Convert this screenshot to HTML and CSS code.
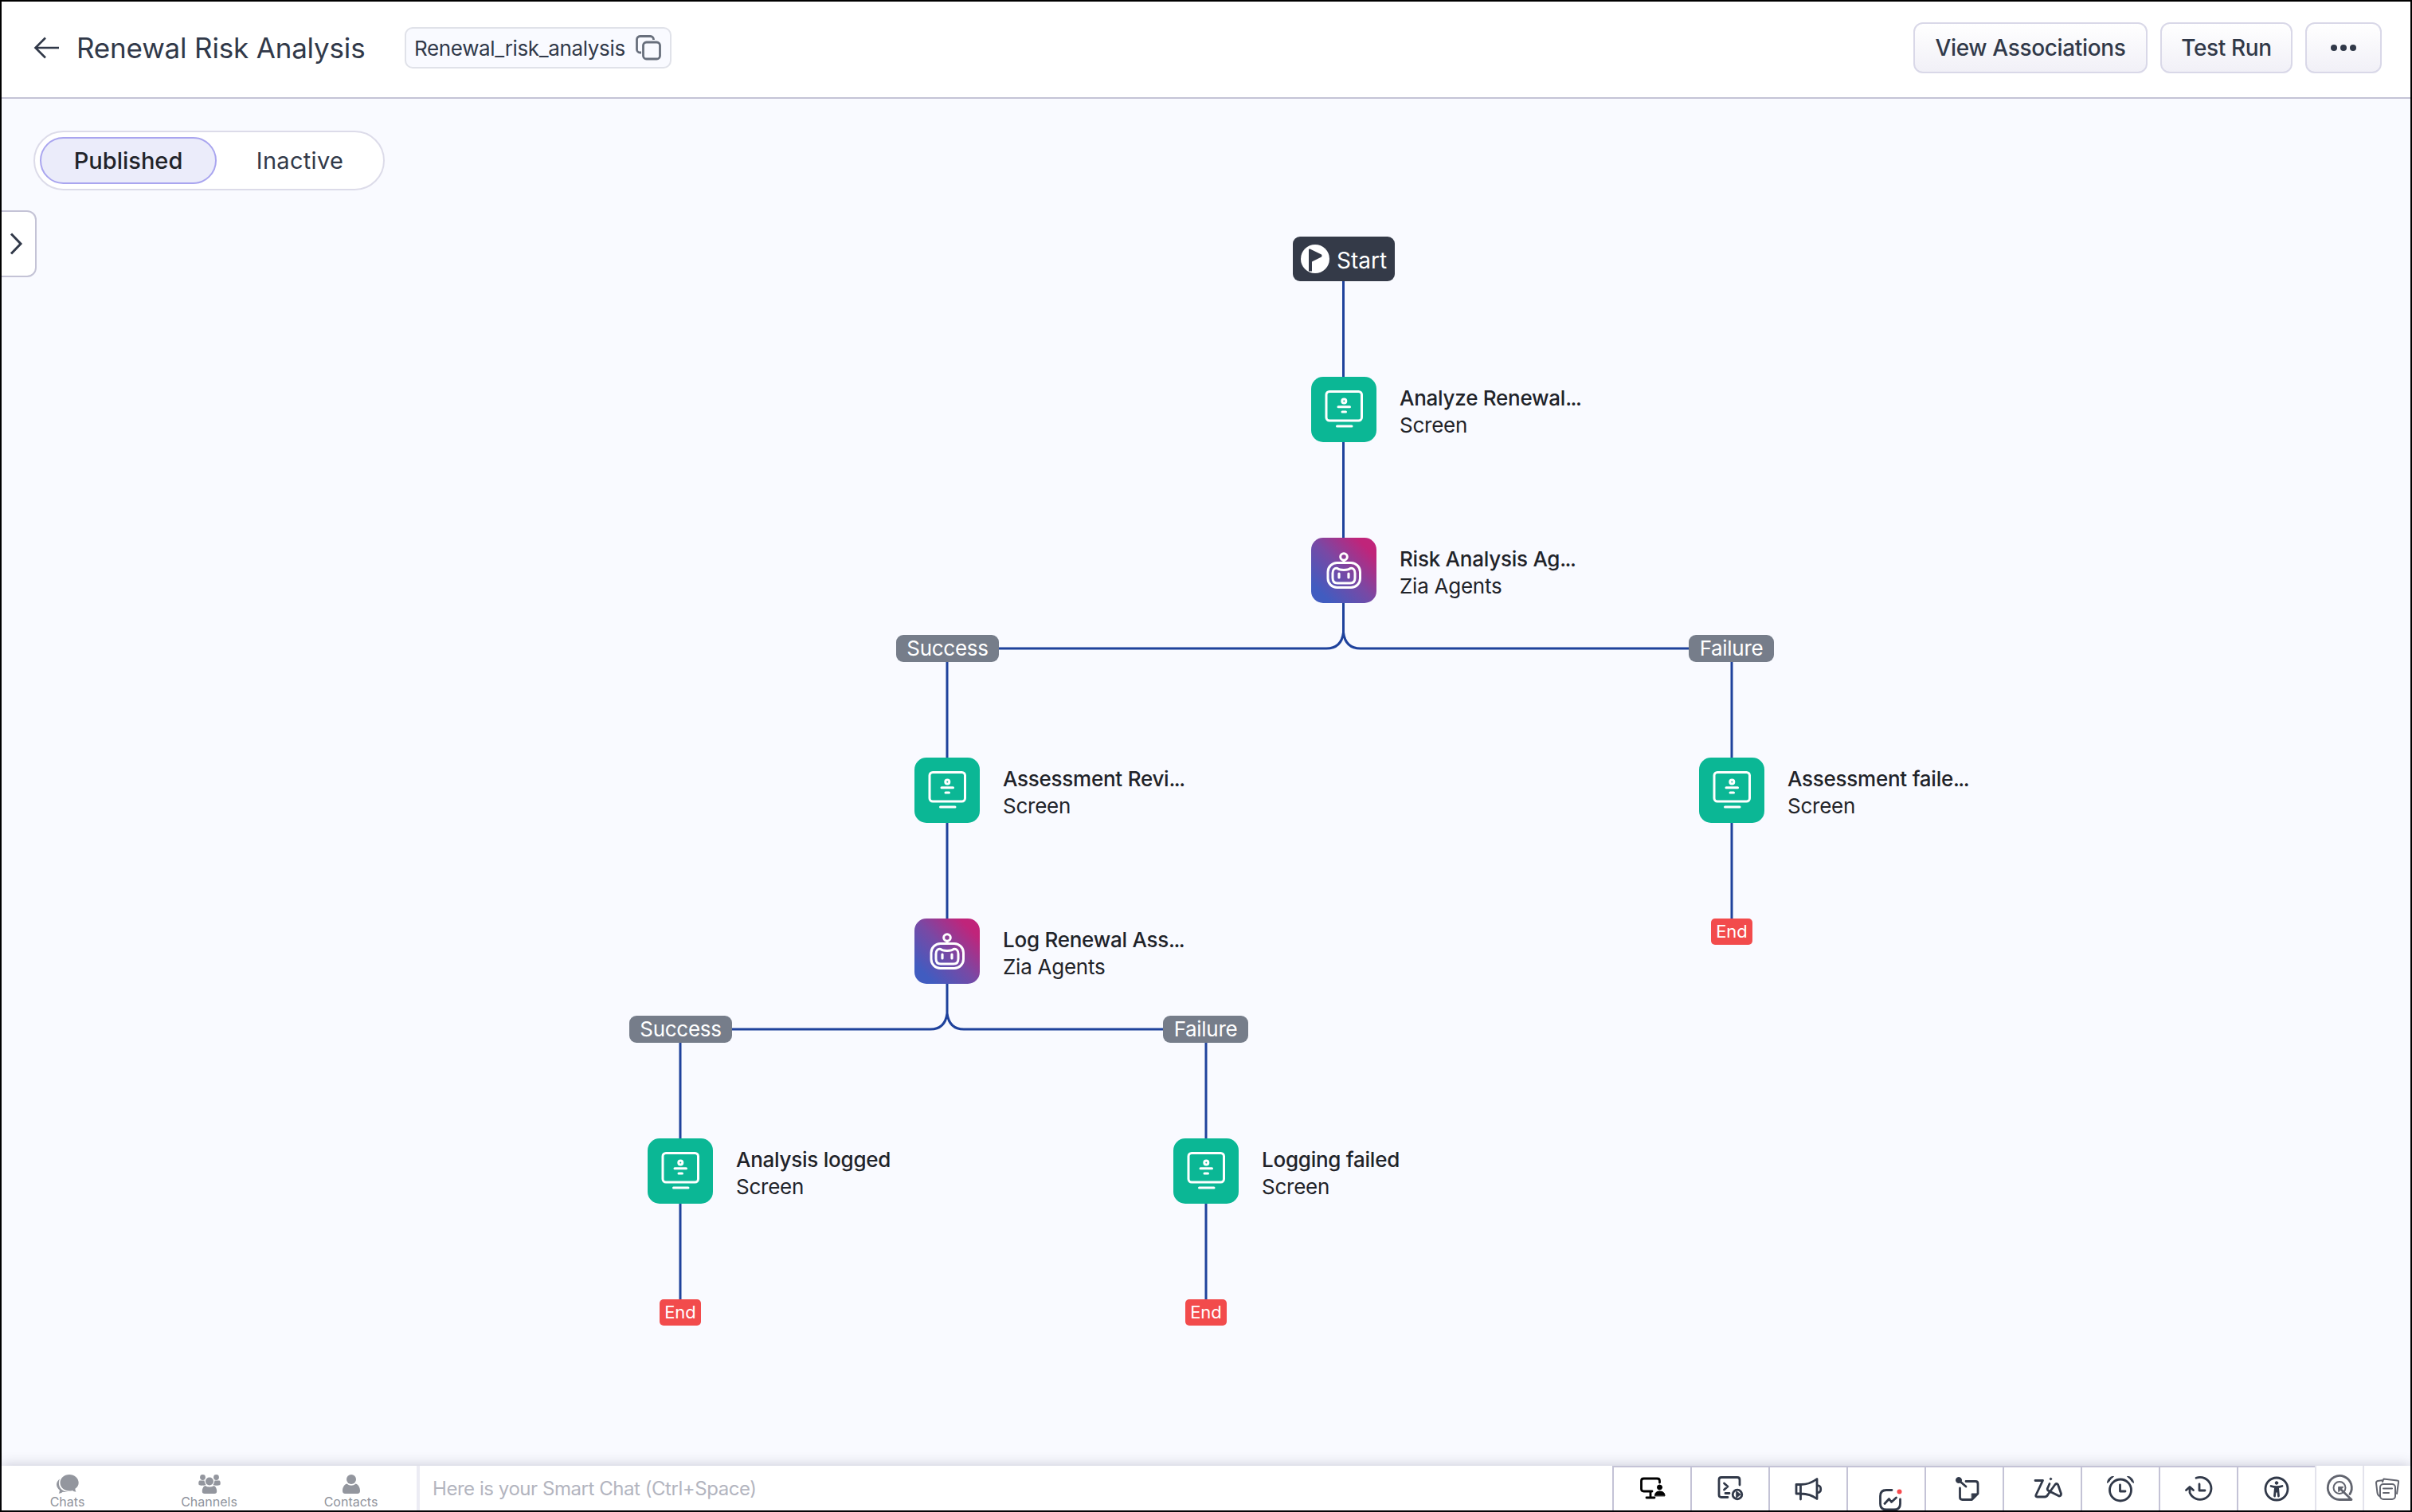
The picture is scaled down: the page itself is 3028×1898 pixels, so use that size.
FILE: index.html
```html
<!DOCTYPE html>
<html lang="en">
<head>
  <meta charset="UTF-8">
  <meta name="viewport" content="width=device-width, initial-scale=1.0">
  <title>Renewal Risk Analysis</title>
  <link rel="stylesheet" href="styles.css">
</head>
<body>
<svg class="defs" width="0" height="0">
  <linearGradient id="ziaGradient" x1="0.15" y1="0.85" x2="0.85" y2="0.15">
    <stop offset="0" stop-color="#415cc0"/>
    <stop offset="0.5" stop-color="#7849a5"/>
    <stop offset="1" stop-color="#c0247a"/>
  </linearGradient>
  <symbol id="icon-screen" viewBox="0 0 82 82">
    <rect width="82" height="82" rx="15" fill="#0bb795"/>
    <g fill="none" stroke="#fff" stroke-width="3" stroke-linecap="round">
      <rect x="19" y="18.500" width="44.500" height="36.500" rx="4"/>
      <circle cx="41.300" cy="30.500" r="2.500"/>
      <path d="M34 37.800h14.500M39 44h4.500M32.500 62h18.500"/>
    </g>
  </symbol>
  <symbol id="icon-zia" viewBox="0 0 82 82">
    <rect width="82" height="82" rx="15" fill="url(#ziaGradient)"/>
    <g fill="none" stroke="#fff" stroke-width="3" stroke-linecap="round" stroke-linejoin="round">
      <circle cx="41" cy="24" r="4.300"/>
      <path d="M41 28.500v3"/>
      <rect x="21" y="31.500" width="40.500" height="31" rx="11.500"/>
      <path d="M33 38.500c2 2.500 14 2.500 16 0 4-1 6 2 6 6v6c0 4-2 6.500-6 6.500H33c-4 0-6-2.500-6-6.500v-6c0-4 2-7 6-6z"/>
      <path d="M35 45v5M47 45v5" stroke-width="3.200"/>
    </g>
  </symbol>
</svg>

<div class="app">
  <header class="header">
    <svg class="back" viewBox="0 0 32 28"><path d="M31 14H2M14 1.500L1.500 14 14 26.500"/></svg>
    <h1 class="title">Renewal Risk Analysis</h1>
    <div class="chip">
      <span>Renewal_risk_analysis</span>
      <svg class="copy" viewBox="0 0 32 32"><path d="M7 22H5.500a4 4 0 0 1-4-4V5.500a4 4 0 0 1 4-4h13a4 4 0 0 1 4 4V6"/><rect x="9.500" y="9" width="21" height="21" rx="4"/></svg>
    </div>
    <div class="actions">
      <button class="btn btn-view">View Associations</button>
      <button class="btn btn-test">Test Run</button>
      <button class="btn btn-more"><i></i><i></i><i></i></button>
    </div>
  </header>

  <main class="canvas">
    <div class="toggle">
      <span class="toggle-item active">Published</span>
      <span class="toggle-item">Inactive</span>
    </div>
    <div class="side-handle"><svg viewBox="0 0 16 28"><path d="M2 1.500L14 14 2 26.500"/></svg></div>

    <!-- connectors, drawn in page coordinates -->
    <svg class="edges" viewBox="2 124 3024 1716">
      <path d="M1686.500 353V795M1686.500 794Q1684 814 1665 814H1254M1686.500 794Q1689 814 1708 814H2120"/>
      <path d="M1189 831V1273M1189 1272Q1186.500 1292 1168 1292H919M1189 1272Q1191.500 1292 1210 1292H1460"/>
      <path d="M2174 831V1153M854 1309V1631M1514 1309V1631"/>
    </svg>

    <div class="start">
      <svg viewBox="0 0 36 36"><circle cx="18" cy="18" r="18" fill="#fff"/><path d="M10 6.500q0-1.500 1.600-1L26 12.500q1.200 1.500 0 3L14 21.500V33.500L10 33.500z" fill="#343a48"/></svg>
      <span>Start</span>
    </div>

    <div class="node n1"><svg><use href="#icon-screen"/></svg><div class="label"><b>Analyze Renewal<i>...</i></b><span>Screen</span></div></div>
    <div class="node n2"><svg><use href="#icon-zia"/></svg><div class="label"><b>Risk Analysis Ag<i>...</i></b><span>Zia Agents</span></div></div>
    <div class="node n3"><svg><use href="#icon-screen"/></svg><div class="label"><b>Assessment Revi<i>...</i></b><span>Screen</span></div></div>
    <div class="node n4"><svg><use href="#icon-zia"/></svg><div class="label"><b>Log Renewal Ass<i>...</i></b><span>Zia Agents</span></div></div>
    <div class="node n5"><svg><use href="#icon-screen"/></svg><div class="label"><b>Assessment faile<i>...</i></b><span>Screen</span></div></div>
    <div class="node n6"><svg><use href="#icon-screen"/></svg><div class="label"><b>Analysis logged</b><span>Screen</span></div></div>
    <div class="node n7"><svg><use href="#icon-screen"/></svg><div class="label"><b>Logging failed</b><span>Screen</span></div></div>

    <div class="badge success b1">Success</div>
    <div class="badge failure b2">Failure</div>
    <div class="badge success b3">Success</div>
    <div class="badge failure b4">Failure</div>

    <div class="end e1">End</div>
    <div class="end e2">End</div>
    <div class="end e3">End</div>
  </main>

  <footer class="bottom-bar">
    <nav class="chat-tabs">
      <div class="chat-tab">
        <svg viewBox="0 0 28 24"><path d="M16 0C9.500 0 4.500 4.500 4.500 10.300S9.500 20.500 16 20.500c1.500 0 2.800-.2 4-.6 1.300 1 2.800 1.600 4.600 1.700-.9-1.200-1.200-2.400-1.200-3.800 2.700-1.900 4.300-4.600 4.300-7.500C27.700 4.500 22.500 0 16 0z"/><path d="M4 5.500C1.500 7.300 0 9.800 0 12.500c0 2.700 1.500 5.200 3.800 6.900.1 1.500-.2 2.900-1.100 4.400 2 0 3.800-.8 5.200-2 1.800.4 4.200.4 6.300-.1C7.500 21.500 2.500 16.500 2.900 10c.1-1.700.4-3 1.100-4.500z"/></svg>
        <span>Chats</span>
      </div>
      <div class="chat-tab">
        <svg viewBox="0 0 28 24"><circle cx="5.500" cy="3.500" r="3.400"/><circle cx="22.500" cy="3.500" r="3.400"/><circle cx="14" cy="8.500" r="5"/><path d="M1.500 7.500h6c.4 2.300 1 4 2 5.500-2 .8-6.500 1-8.800 0C-.2 11 .3 8.500 1.500 7.500zM26.500 7.500h-6c-.4 2.300-1 4-2 5.500 2 .8 6.500 1 8.800 0 .9-2 .4-4.500-.8-5.500zM8.500 14c3.500 2 7.500 2 11 0 2.500.8 3.700 4 3.700 7 0 2-1 3-3 3H7.800c-2 0-3-1-3-3 0-3 1.200-6.200 3.700-7z"/></svg>
        <span>Channels</span>
      </div>
      <div class="chat-tab">
        <svg viewBox="0 0 28 24"><circle cx="14" cy="6" r="6"/><path d="M8.500 11.500c3.300 3 7.700 3 11 0 3.700 1 5.500 5 5.500 9 0 2.300-1 3.500-3.300 3.500H6.300C4 24 3 22.800 3 20.500c0-4 1.800-8 5.500-9z"/></svg>
        <span>Contacts</span>
      </div>
    </nav>
    <div class="smart-chat">Here is your Smart Chat (Ctrl+Space)</div>
    <div class="tools">
      <div class="tool"><svg class="black" viewBox="0 0 36 36"><path d="M27.500 10V8q0-3-3-3h-17q-3 0-3 3v10q0 3 3 3H18M16 21v7M11 29h10"/><circle cx="27.500" cy="16" r="3" class="fill"/><path d="M21.500 26.500c0-4 2.500-5.500 6-5.500s6.500 1.500 6.500 5.500z" class="fill"/></svg></div>
      <div class="tool"><svg viewBox="0 0 36 36"><path d="M30 13V6.500q0-3-3-3H7q-3 0-3 3v19q0 3 3 3h8M10.500 11l4.500 4-4.500 4M12 23.500h5"/><circle cx="27" cy="25" r="5.800"/><path d="M26 21l5 4-5 4z" class="fill"/></svg></div>
      <div class="tool"><svg viewBox="0 0 36 36"><path d="M3 12.500h6C16 12.500 23 10 29 5.500v25C23 26 16 24 9 24H3zM8.500 12.500V31M30 13.500c5 1 5 8.500 0 9.500"/></svg></div>
      <div class="tool low"><svg viewBox="0 0 36 36"><path d="M19 5.500h-7Q4.500 5.500 4.500 13v9.500Q4.500 30 12 30h10q7.500 0 7.500-7.500V17M10 22.500l5.500-6 3 4 6-5.500"/><circle cx="28.500" cy="7.500" r="3" class="red"/></svg></div>
      <div class="tool note"><svg viewBox="0 0 36 36"><path d="M15 8.500h12q3 0 3 3V24l-7.500 7.500H10.500q-3 0-3-3V17M7 8l8 7"/><circle cx="6" cy="7" r="3.500" class="fill"/><path d="M22.500 24H30l-7.500 7.500z" class="fill"/></svg></div>
      <div class="tool zia"><svg viewBox="0 0 36 36"><path d="M2 7.500h9.500L3 25.500q-1 2.500 1.500 2.500H14q2.500 0 4-3l9-12.500q2-2 3.500 0l4 11.500q0 3-2.500 3L18 20q-1.500-2 0-4l2-4.500"/><circle cx="21.500" cy="5.500" r="1.200" class="fill"/></svg></div>
      <div class="tool"><svg viewBox="0 0 36 36"><circle cx="18" cy="19.500" r="13.500"/><path d="M17.500 13v8H24"/><path d="M1.500 10C2 5 6 2 9.500 2.500q-3.500 2-6 6.500zM34.500 10C34 5 30 2 26.500 2.500q3.500 2 6 6.500z" class="fill"/></svg></div>
      <div class="tool"><svg viewBox="0 0 36 36"><path d="M15 4.300a14 14 0 1 1-8 18.500V17M2.500 19.500L7 15.500l4.500 4M19 12v8h7"/></svg></div>
      <div class="tool"><svg viewBox="0 0 36 36"><circle cx="18" cy="18" r="14"/><circle cx="18" cy="10.500" r="1.800" class="fill"/><path d="M11 14.500q7 2.500 14 0M18 16v5M15.500 27l1-11h3l1 11" /></svg></div>
      <div class="tool plain"><svg viewBox="0 0 36 36"><path d="M33 32.500H18A15 15 0 1 1 31 25.500M18 18l14.500 14"/><circle cx="18" cy="17.500" r="7.500" stroke-width="2"/><path d="M17 16.500h6l-6 6z" class="fill"/></svg></div>
      <div class="tool plain thin"><svg viewBox="0 0 36 36"><rect x="9" y="13" width="19" height="19" rx="4"/><path d="M8 28q-2-1-2.500-4L4 11.500q0-2 2-2.500l7-1M12 10l1.500-3.500 17 2q2 0 1.500 2.500l-2 14M13 18.500h11M13 24h7"/></svg></div>
    </div>
  </footer>
</div>
</body>
</html>
```
FILE: styles.css
```css
* {
  margin: 0;
  padding: 0;
  box-sizing: border-box;
  font-family: Inter, 'Liberation Sans', sans-serif;
}

body {
  width: 100vw;
  height: 100vh;
  overflow: hidden;
  background: #f9faff;
  color: #212329;
}

svg {
  display: block;
  overflow: visible;
}

.defs {
  position: absolute;
}

.app {
  height: 100vh;
  display: flex;
  flex-direction: column;
  border: 2px solid #000;
}

/* header */
.header {
  height: 122px;
  flex: none;
  display: flex;
  align-items: center;
  padding: 0 36px 4px 41px;
  background: #fff;
  border-bottom: 2px solid #c4c3d6;
  color: #313949;
}

.back {
  width: 32px;
  height: 28px;
  margin-right: 21px;
  fill: none;
  stroke: #313949;
  stroke-width: 2.6;
}

.title {
  width: 412px;
  font-size: 35px;
  font-weight: 400;
  letter-spacing: -0.18px;
  white-space: nowrap;
}

.chip {
  width: 335px;
  height: 52px;
  display: flex;
  align-items: center;
  justify-content: space-between;
  padding: 0 11px 0 10px;
  background: #f9faff;
  border: 2px solid #e0e2e9;
  border-radius: 10px;
  font-size: 26px;
  letter-spacing: -0.35px;
}

.copy {
  width: 32px;
  height: 32px;
  fill: none;
  stroke: #686f7c;
  stroke-width: 2.8;
}

.actions {
  margin-left: auto;
  display: flex;
  gap: 16px;
}

.btn {
  height: 64px;
  display: flex;
  align-items: center;
  justify-content: center;
  background: linear-gradient(#fff, #f1f0f7);
  border: 2px solid #d9d8e8;
  border-radius: 12px;
  color: #313949;
  font-size: 28px;
  font-weight: 500;
  letter-spacing: -0.35px;
  white-space: nowrap;
}

.btn-view {
  width: 294px;
}

.btn-test {
  width: 166px;
}

.btn-more {
  width: 96px;
  gap: 4px;
}

.btn-more i {
  width: 8px;
  height: 8px;
  border-radius: 50%;
  background: #313949;
}

/* canvas */
.canvas {
  position: relative;
  flex: 1;
  padding: 40px;
}

.toggle {
  width: 441px;
  height: 75px;
  display: flex;
  align-items: center;
  padding: 0 0 0 6px;
  background: #fff;
  border: 2px solid #dcdbe9;
  border-radius: 38px;
}

.toggle-item {
  flex: 1;
  height: 59px;
  display: flex;
  align-items: center;
  justify-content: center;
  color: #313949;
  font-size: 29px;
  letter-spacing: 0.3px;
}

.toggle-item.active {
  flex: 0 0 222px;
  background: #ebecfa;
  border: 2px solid #a9a5ef;
  border-radius: 30px;
  color: #212329;
  font-weight: 500;
  letter-spacing: 0;
}

.side-handle {
  position: absolute;
  left: 0;
  top: 140px;
  width: 44px;
  height: 84px;
  display: flex;
  align-items: center;
  padding-left: 10px;
  background: #fff;
  border: 2px solid #c4c3d6;
  border-left: 0;
  border-radius: 0 12px 12px 0;
}

.side-handle svg {
  width: 16px;
  height: 28px;
  fill: none;
  stroke: #313949;
  stroke-width: 3;
}

.edges {
  position: absolute;
  left: 0;
  top: 0;
  width: 3024px;
  height: 1716px;
  fill: none;
  stroke: #1f429c;
  stroke-width: 3;
}

.start {
  position: absolute;
  left: 1621px;
  top: 173px;
  width: 128px;
  height: 56px;
  display: flex;
  align-items: center;
  gap: 9px;
  padding: 0 10px;
  background: #343a48;
  border-radius: 9px;
  color: #fff;
  font-size: 28px;
}

.start svg {
  width: 36px;
  height: 36px;
  flex: none;
}

.start span {
  padding-top: 4px;
}

.node {
  position: absolute;
  display: flex;
  gap: 29px;
}

.node svg {
  width: 82px;
  height: 82px;
}

.label {
  display: flex;
  flex-direction: column;
  padding-top: 10px;
  font-size: 26px;
  line-height: 34px;
  letter-spacing: -0.25px;
  white-space: nowrap;
}

.label b {
  font-weight: 500;
}

.label i {
  font-style: normal;
  letter-spacing: -1.5px;
}

.n1 { left: 1644px; top: 349px; }
.n2 { left: 1644px; top: 551px; }
.n3 { left: 1146px; top: 827px; }
.n4 { left: 1146px; top: 1029px; }
.n5 { left: 2131px; top: 827px; }
.n6 { left: 811px; top: 1305px; }
.n7 { left: 1471px; top: 1305px; }

.badge {
  position: absolute;
  height: 34px;
  display: flex;
  align-items: center;
  justify-content: center;
  padding-bottom: 2px;
  background: #767d8a;
  border-radius: 9px;
  color: #fff;
  font-size: 26px;
  letter-spacing: -0.3px;
}

.success { width: 129px; }
.failure { width: 107px; }

.b1 { left: 1123px; top: 673px; }
.b2 { left: 2118px; top: 673px; }
.b3 { left: 788px; top: 1151px; }
.b4 { left: 1458px; top: 1151px; }

.end {
  position: absolute;
  width: 52px;
  height: 33px;
  display: flex;
  align-items: center;
  justify-content: center;
  padding-bottom: 1px;
  background: #f24b4c;
  border-radius: 5px;
  color: #fff;
  font-size: 22px;
}

.e1 { left: 2146px; top: 1029px; }
.e2 { left: 826px; top: 1507px; }
.e3 { left: 1486px; top: 1507px; }

/* bottom bar */
.bottom-bar {
  position: relative;
  height: 56px;
  flex: none;
  display: flex;
  background: #fff;
  box-shadow: 0 -2px 14px rgba(60, 60, 90, 0.22);
}

.chat-tabs {
  display: grid;
  grid-template-columns: 165px 191px 165px;
  border-right: 4px solid #ececf4;
}

.chat-tab {
  display: flex;
  flex-direction: column;
  align-items: center;
  padding-top: 11px;
  color: #8f939c;
  font-size: 16px;
  line-height: 20px;
}

.chat-tab svg {
  width: 28px;
  height: 24px;
  fill: #93969e;
}

.smart-chat {
  flex: 1;
  display: flex;
  align-items: center;
  padding-left: 16px;
  color: #b3b5bf;
  font-size: 24px;
  letter-spacing: -0.45px;
}

.tools {
  display: flex;
}

.tool {
  width: 98px;
  display: flex;
  align-items: center;
  justify-content: center;
  border-left: 2px solid #c4c3d6;
  border-top: 2px solid #c4c3d6;
}

.tool svg {
  width: 36px;
  height: 36px;
  fill: none;
  stroke: #313949;
  stroke-width: 2.8;
  stroke-linecap: round;
  stroke-linejoin: round;
}

.tool .fill {
  fill: #313949;
  stroke-width: 1;
}

.tool .red {
  fill: #f84b4f;
  stroke: none;
}

.tool svg.black {
  stroke: #000;
}

.tool .black .fill {
  fill: #000;
}

.tool.low {
  padding: 28px 0 0 12px;
  overflow: hidden;
}

.tool.note {
  padding-left: 10px;
}

.tool.zia {
  padding-left: 13px;
}

.tool.plain {
  width: 60px;
  border-top: 0;
  border-left-color: #e3e3ec;
}

.tool.plain svg {
  stroke: #62656f;
}

.tool.plain .fill {
  fill: #62656f;
}

.tool.thin svg {
  stroke-width: 2;
}
```
